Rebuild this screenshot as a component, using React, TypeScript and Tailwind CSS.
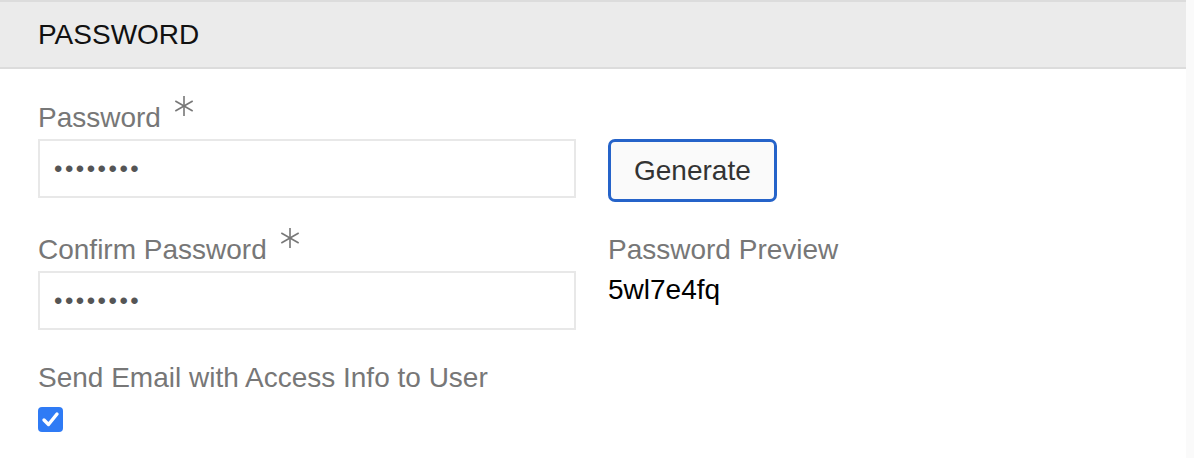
const Asterisk = () => (
  <svg
    width="22"
    height="22"
    viewBox="0 0 22 22"
    className="ml-[12px] -mt-[7px] shrink-0"
    fill="none"
    stroke="#777777"
    strokeWidth="1.6"
  >
    <line x1="11" y1="1" x2="11" y2="21" />
    <line x1="2.3" y1="6" x2="19.7" y2="16" />
    <line x1="2.3" y1="16" x2="19.7" y2="6" />
  </svg>
);

const FieldLabel = ({ text, required }: { text: string; required?: boolean }) => (
  <div className="flex items-start h-[35px] pt-[3px] text-[28px] leading-[32px] text-[#777777]">
    <span>{text}</span>
    {required && <Asterisk />}
  </div>
);

const PasswordInput = () => (
  <input
    type="password"
    readOnly
    value="abcdefgh"
    className="mt-[5px] block w-[538px] h-[59px] border-2 border-[#e8e8e8] bg-white pl-[14px] text-[24px] tracking-[2.5px] text-[#555555] outline-none"
  />
);

export default function App() {
  return (
    <div
      className="flex min-h-[458px] bg-white"
      style={{ fontFamily: '"Liberation Sans", Arial, sans-serif' }}
    >
      <div className="w-[1186px] shrink-0">
        {/* Section header */}
        <div className="h-[69px] border-y-2 border-[#dcdcdc] bg-[#ebebeb] pl-[38px] flex items-center">
          <h2 className="text-[28px] text-[#111111]">PASSWORD</h2>
        </div>

        <div className="pl-[38px] pt-[30px]">
          {/* Password row */}
          <div className="flex items-start gap-[32px] h-[99px]">
            <div>
              <FieldLabel text="Password" required />
              <PasswordInput />
            </div>
            <div className="pt-[40px]">
              <button className="h-[63px] px-[23px] rounded-[7px] border-[3px] border-[#2563c9] bg-[#fafafa] text-[28px] text-[#333333]">
                Generate
              </button>
            </div>
          </div>

          {/* Confirm row */}
          <div className="flex items-start gap-[32px] mt-[33px]">
            <div>
              <FieldLabel text="Confirm Password" required />
              <PasswordInput />
            </div>
            <div>
              <FieldLabel text="Password Preview" />
              <div className="mt-[8px] text-[28px] leading-[32px] text-black">5wl7e4fq</div>
            </div>
          </div>

          {/* Email toggle */}
          <div className="mt-[29px]">
            <FieldLabel text="Send Email with Access Info to User" />
            <div className="mt-[13px] w-[25px] h-[25px] rounded-[4px] bg-[#2f7bf5] flex items-center justify-center">
              <svg width="19" height="19" viewBox="0 0 19 19" fill="none">
                <path
                  d="M3 10 L7.5 14.5 L16 4"
                  stroke="white"
                  strokeWidth="3.4"
                  strokeLinecap="round"
                  strokeLinejoin="round"
                />
              </svg>
            </div>
          </div>
        </div>
      </div>
      <div className="flex-1 bg-[#fafafa]" />
    </div>
  );
}
